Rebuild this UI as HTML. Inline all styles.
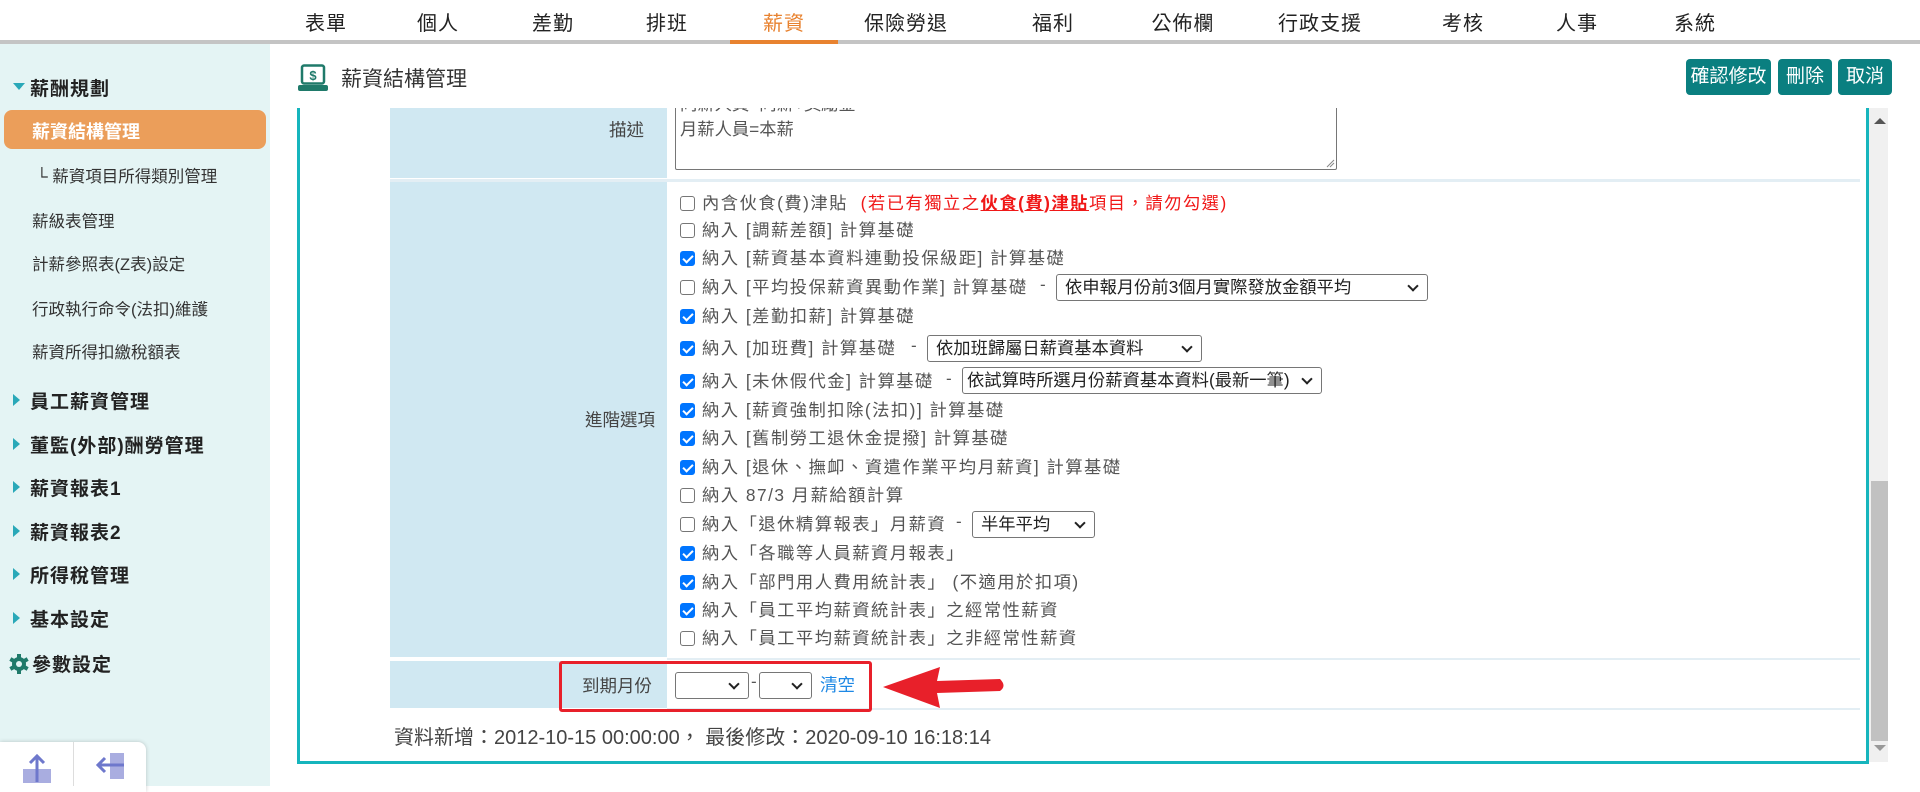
<!DOCTYPE html>
<html><head><meta charset="utf-8"><style>
*{margin:0;padding:0;box-sizing:border-box}
body{width:1920px;height:786px;overflow:hidden;background:#fff;font-family:"Liberation Sans","Noto Sans CJK TC",sans-serif;color:#333;position:relative}
.a{position:absolute;white-space:nowrap}
.nav{font-size:20px;color:#222;top:7px;transform:translateX(-50%);letter-spacing:1px}
.side{background:#e4f4f4;left:0;top:44px;width:270px;height:742px}
.grp{font-size:19px;font-weight:bold;color:#222;left:30px;letter-spacing:1px}
.tri{position:absolute;left:-17px;top:7px;width:0;height:0;border-top:6px solid transparent;border-bottom:6px solid transparent;border-left:7px solid #29a8b8}
.sub{font-size:16.5px;color:#333;left:32px}
.btn{background:#0a7f80;color:#fff;font-size:19px;border-radius:4px;top:59px;height:36px;text-align:center;line-height:36px}
.ln{font-size:17.3px;color:#555;left:680px;line-height:24px;display:flex;align-items:center;letter-spacing:1.5px}
.cb{width:15px;height:15px;border:1.5px solid #767676;border-radius:3px;margin-right:7px;display:inline-block;background:#fff;flex:none}
.cb.on{background:#0075ff;border-color:#0075ff;position:relative}
.cb.on:after{content:"";position:absolute;left:4px;top:1px;width:4px;height:8px;border:solid #fff;border-width:0 2px 2px 0;transform:rotate(45deg)}
.sel{position:absolute;border:1px solid #767676;border-radius:3px;height:27px;background:#fff;padding-left:8px;line-height:25px;color:#222;font-size:17.3px;white-space:nowrap;overflow:hidden}
.sel:after{content:"";position:absolute;right:10px;top:7px;width:6px;height:6px;border:solid #222;border-width:0 2px 2px 0;transform:rotate(45deg)}
.dash{position:absolute;font-size:17px;color:#555}
</style></head><body>
<div class="a nav" style="left:326px">表單</div>
<div class="a nav" style="left:438px">個人</div>
<div class="a nav" style="left:553px">差勤</div>
<div class="a nav" style="left:667px">排班</div>
<div class="a nav" style="left:784px;color:#e8822f">薪資</div>
<div class="a nav" style="left:906px">保險勞退</div>
<div class="a nav" style="left:1053px">福利</div>
<div class="a nav" style="left:1183px">公佈欄</div>
<div class="a nav" style="left:1320px">行政支援</div>
<div class="a nav" style="left:1463px">考核</div>
<div class="a nav" style="left:1577px">人事</div>
<div class="a nav" style="left:1695px">系統</div>
<div class="a" style="left:0;top:40px;width:1920px;height:4px;background:#c4c4c4"></div>
<div class="a" style="left:730px;top:40px;width:108px;height:4px;background:#e8822f"></div>

<div class="a side"></div>
<div class="a grp" style="top:74px"><span class="tri" style="left:-17px;top:9px;border-left:6px solid transparent;border-right:6px solid transparent;border-top:7px solid #29a8b8;border-bottom:0"></span>薪酬規劃</div>
<div class="a" style="left:4px;top:110px;width:262px;height:39px;background:#eb9e5a;border-radius:8px"></div>
<div class="a" style="left:32px;top:118px;font-size:18px;font-weight:bold;color:#fff">薪資結構管理</div>
<div class="a sub" style="top:163px;left:36px">└ 薪資項目所得類別管理</div>
<div class="a sub" style="top:208px">薪級表管理</div>
<div class="a sub" style="top:251px">計薪參照表(Z表)設定</div>
<div class="a sub" style="top:296px">行政執行命令(法扣)維護</div>
<div class="a sub" style="top:339px">薪資所得扣繳稅額表</div>
<div class="a grp" style="top:387px"><span class="tri"></span>員工薪資管理</div>
<div class="a grp" style="top:431px"><span class="tri"></span>董監(外部)酬勞管理</div>
<div class="a grp" style="top:474px"><span class="tri"></span>薪資報表1</div>
<div class="a grp" style="top:518px"><span class="tri"></span>薪資報表2</div>
<div class="a grp" style="top:561px"><span class="tri"></span>所得稅管理</div>
<div class="a grp" style="top:605px"><span class="tri"></span>基本設定</div>
<div class="a grp" style="top:650px;left:32px">參數設定</div>
<svg class="a" style="left:8px;top:653px" width="22" height="22" viewBox="0 0 22 22"><g fill="#1f7a6a"><circle cx="11" cy="11" r="7"/><g><rect x="9" y="1" width="4" height="20"/><rect x="9" y="1" width="4" height="20" transform="rotate(60 11 11)"/><rect x="9" y="1" width="4" height="20" transform="rotate(120 11 11)"/></g></g><circle cx="11" cy="11" r="3" fill="#e4f4f4"/></svg>
<div class="a" style="left:0;top:742px;width:146px;height:50px;background:#fff;border-radius:0 8px 0 0;box-shadow:0 0 4px rgba(0,0,0,.2)"></div>
<div class="a" style="left:73px;top:742px;width:1px;height:44px;background:#ddd"></div>
<svg class="a" style="left:20px;top:752px" width="34" height="34"><rect x="3" y="17" width="28" height="14" fill="#a9ade0"/><path d="M17 30V4M10 11l7-7 7 7" stroke="#6e78cc" stroke-width="3" fill="none"/></svg>
<svg class="a" style="left:92px;top:752px" width="34" height="34"><rect x="18" y="1" width="14" height="26" fill="#a9ade0"/><path d="M32 13H6M13 6l-7 7 7 7" stroke="#6e78cc" stroke-width="3" fill="none"/></svg>

<svg class="a" style="left:298px;top:64px" width="30" height="28" viewBox="0 0 30 28"><rect x="4" y="1.5" width="22" height="18" rx="2" fill="none" stroke="#1f7a6a" stroke-width="2.5"/><rect x="0" y="21" width="30" height="6" rx="2" fill="#1f7a6a"/><text x="15" y="16" font-size="13" font-weight="bold" fill="#1f7a6a" text-anchor="middle" font-family="Liberation Sans">$</text></svg>
<div class="a" style="left:341px;top:63px;font-size:21px;color:#333">薪資結構管理</div>
<div class="a btn" style="left:1686px;width:85px">確認修改</div>
<div class="a btn" style="left:1778px;width:54px">刪除</div>
<div class="a btn" style="left:1838px;width:54px">取消</div>

<div class="a" style="left:297px;top:108px;width:1572px;height:656px;border:3px solid #16b5bd;border-top:0"></div>
<div class="a" style="left:1869px;top:108px;width:19px;height:654px;background:#f0f0f0"></div>
<div class="a" style="left:1871px;top:481px;width:17px;height:260px;background:#c1c1c1"></div>
<div class="a" style="left:1874px;top:118px;border-left:6px solid transparent;border-right:6px solid transparent;border-bottom:6px solid #555"></div>
<div class="a" style="left:1874px;top:745px;border-left:6px solid transparent;border-right:6px solid transparent;border-top:6px solid #999"></div>

<div class="a" style="left:390px;top:108px;width:277px;height:70px;background:#d0e8f2"></div>
<div class="a" style="left:390px;top:182px;width:277px;height:475px;background:#d0e8f2"></div>
<div class="a" style="left:390px;top:661px;width:277px;height:47px;background:#d0e8f2"></div>
<div class="a" style="left:390px;top:179px;width:1470px;height:3px;background:#e3eef4"></div>
<div class="a" style="left:667px;top:658px;width:1193px;height:2px;background:#e3eef4"></div>
<div class="a" style="left:667px;top:708px;width:1193px;height:2px;background:#e3eef4"></div>
<div class="a" style="left:609px;top:117px;font-size:17.5px;color:#444">描述</div>
<div class="a" style="left:585px;top:407px;font-size:17.5px;color:#444">進階選項</div>
<div class="a" style="left:582px;top:673px;font-size:17.5px;color:#444">到期月份</div>
<div class="a" style="left:670px;top:108px;width:680px;height:64px;overflow:hidden">
<div style="position:absolute;left:5px;top:-22px;width:662px;height:84px;border:1px solid #767676;border-radius:2px;background:#fff"><div style="position:absolute;left:4px;top:5px;font-size:17.3px;color:#555;line-height:25px">同薪人員=同薪+獎勵金<br>月薪人員=本薪</div></div>
</div>
<svg class="a" style="left:1326px;top:159px" width="9" height="9"><path d="M1 8L8 1M4 8L8 4" stroke="#888"/></svg>

<div class="a ln" style="top:191px"><span class="cb"></span>內含伙食(費)津貼&nbsp;&nbsp;<span style="color:#f01818">(若已有獨立之<b><u>伙食(費)津貼</u></b>項目，請勿勾選)</span></div>
<div class="a ln" style="top:218px"><span class="cb"></span>納入 [調薪差額] 計算基礎</div>
<div class="a ln" style="top:246px"><span class="cb on"></span>納入 [薪資基本資料連動投保級距] 計算基礎</div>
<div class="a ln" style="top:275px"><span class="cb"></span>納入 [平均投保薪資異動作業] 計算基礎</div>
<div class="dash" style="left:1040px;top:275px">-</div>
<div class="sel" style="left:1056px;top:274px;width:372px">依申報月份前3個月實際發放金額平均</div>
<div class="a ln" style="top:304px"><span class="cb on"></span>納入 [差勤扣薪] 計算基礎</div>
<div class="a ln" style="top:336px"><span class="cb on"></span>納入 [加班費] 計算基礎</div>
<div class="dash" style="left:911px;top:336px">-</div>
<div class="sel" style="left:927px;top:335px;width:275px">依加班歸屬日薪資基本資料</div>
<div class="a ln" style="top:369px"><span class="cb on"></span>納入 [未休假代金] 計算基礎</div>
<div class="dash" style="left:946px;top:369px">-</div>
<div class="sel" style="left:962px;top:367px;width:360px;padding-left:4px">依試算時所選月份薪資基本資料(最新一筆)</div>
<div class="a ln" style="top:398px"><span class="cb on"></span>納入 [薪資強制扣除(法扣)] 計算基礎</div>
<div class="a ln" style="top:426px"><span class="cb on"></span>納入 [舊制勞工退休金提撥] 計算基礎</div>
<div class="a ln" style="top:455px"><span class="cb on"></span>納入 [退休、撫卹、資遣作業平均月薪資] 計算基礎</div>
<div class="a ln" style="top:483px"><span class="cb"></span>納入 87/3 月薪給額計算</div>
<div class="a ln" style="top:512px"><span class="cb"></span>納入「退休精算報表」月薪資</div>
<div class="dash" style="left:956px;top:512px">-</div>
<div class="sel" style="left:972px;top:511px;width:123px">半年平均</div>
<div class="a ln" style="top:541px"><span class="cb on"></span>納入「各職等人員薪資月報表」</div>
<div class="a ln" style="top:570px"><span class="cb on"></span>納入「部門用人費用統計表」 (不適用於扣項)</div>
<div class="a ln" style="top:598px"><span class="cb on"></span>納入「員工平均薪資統計表」之經常性薪資</div>
<div class="a ln" style="top:626px"><span class="cb"></span>納入「員工平均薪資統計表」之非經常性薪資</div>

<div class="sel" style="left:675px;top:672px;width:74px"></div>
<div class="dash" style="left:751px;top:672px">-</div>
<div class="sel" style="left:759px;top:672px;width:53px"></div>
<div class="a" style="left:820px;top:672px;font-size:17.5px;color:#1e88e5">清空</div>
<div class="a" style="left:559px;top:661px;width:313px;height:51px;border:3.5px solid #e8202a;border-radius:3px"></div>
<svg class="a" style="left:880px;top:662px" width="126" height="50"><path d="M3 25L60 5 57 19 120 17Q127 24 120 29L57 31 60 46Z" fill="#e8202a"/></svg>

<div class="a" style="left:394px;top:721px;font-size:20px;color:#444">資料新增：2012-10-15 00:00:00， 最後修改：2020-09-10 16:18:14</div>
</body></html>
